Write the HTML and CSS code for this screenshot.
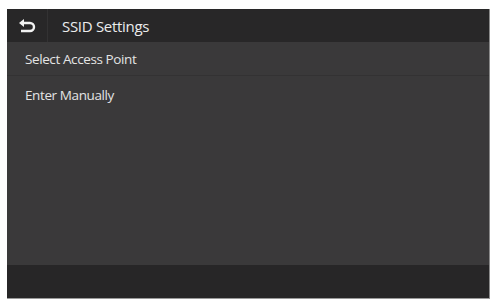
FILE: index.html
```html
<!DOCTYPE html>
<html>
<head>
<meta charset="utf-8">
<link rel="stylesheet" href="styles.css">
</head>
<body>
<div class="screen">
  <div class="header">
    <div class="back">
      <svg width="18" height="16" viewBox="0 0 18 16">
        <path d="M3 5 H12 A4 4 0 0 1 12 13 H3" fill="none" stroke="#f2f2f2" stroke-width="2.4"/>
        <path d="M1 5 L6 1 V9 Z" fill="#f2f2f2"/>
      </svg>
    </div>
    <div class="title">SSID Settings</div>
  </div>
  <div class="list">
    <div class="row first">Select Access Point</div>
    <div class="row second">Enter Manually</div>
  </div>
  <div class="footer"></div>
</div>
</body>
</html>
```
FILE: styles.css
```css
html, body {
  margin: 0;
  padding: 0;
  background: #ffffff;
}
.screen {
  margin: 9px 2px 0 7px;
  height: 289px;
  display: flex;
  flex-direction: column;
  background: #3a393a;
  border-right: 1px solid #8a8a8a;
  border-bottom: 1px solid #9a9a9a;
  font-family: "Open Sans", sans-serif;
  color: #e6e6e6;
}
.header {
  height: 33px;
  display: flex;
  align-items: center;
  background: #282728;
}
.back {
  width: 41px;
  height: 100%;
  display: flex;
  align-items: center;
  justify-content: center;
  border-right: 1px solid #333233;
  box-sizing: border-box;
}
.title {
  padding-left: 14px;
  font-size: 15px;
  letter-spacing: -0.3px;
  color: #ececec;
}
.list {
  flex: 1;
  display: flex;
  flex-direction: column;
}
.row {
  height: 35px;
  display: flex;
  align-items: center;
  padding-left: 18px;
  font-size: 13.5px;
  letter-spacing: -0.4px;
  color: #e4e4e4;
  box-sizing: border-box;
}
.row.first {
  height: 34px;
  padding-top: 1px;
  border-bottom: 1px solid #333233;
}
.row.second {
  padding-top: 3px;
}
.footer {
  height: 33px;
  background: #272627;
}
```
